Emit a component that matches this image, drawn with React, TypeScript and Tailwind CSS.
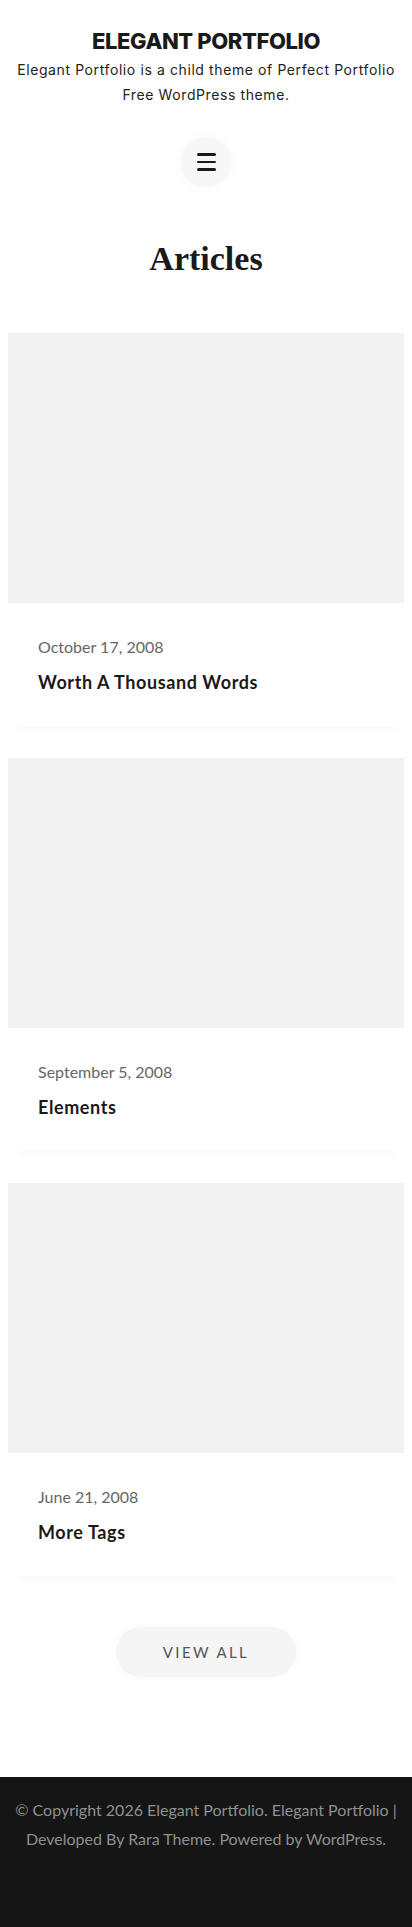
import { useState } from "react";

type Post = {
  id: number;
  date: string;
  title: string;
};

const POSTS: Post[] = [
  { id: 1, date: "October 17, 2008", title: "Worth A Thousand Words" },
  { id: 2, date: "September 5, 2008", title: "Elements" },
  { id: 3, date: "June 21, 2008", title: "More Tags" },
];

function MenuButton({ onClick }: { onClick: () => void }) {
  return (
    <button
      onClick={onClick}
      aria-label="Menu"
      className="flex h-[50px] w-[50px] flex-col items-center justify-center gap-[5px] rounded-full bg-[#f7f7f7] shadow-[0_0_12px_rgba(0,0,0,0.04)]"
    >
      <span className="block h-[2.5px] w-[19px] rounded-full bg-[#1a1a1a]" />
      <span className="block h-[2.5px] w-[19px] rounded-full bg-[#1a1a1a]" />
      <span className="block h-[2.5px] w-[19px] rounded-full bg-[#1a1a1a]" />
    </button>
  );
}

function PostCard({ post }: { post: Post }) {
  return (
    <article className="flex flex-col">
      <div className="h-[270px] w-full bg-[#f2f2f2]" />
      <div className="flex flex-col gap-[9px] bg-white px-[30px] pb-[30px] pt-[32px] shadow-[0_8px_12px_-8px_rgba(0,0,0,0.05)]">
        <p className="text-[16px] leading-[24px] text-[#666]">{post.date}</p>
        <h3 className="text-[18px] font-bold leading-[28px] tracking-[0.6px] text-[#1a1a1a]">
          <a href="#">{post.title}</a>
        </h3>
      </div>
    </article>
  );
}

export default function App() {
  const [menuOpen, setMenuOpen] = useState(false);

  return (
    <div className="flex min-h-[1927px] flex-col bg-white font-['Lato',sans-serif]">
      {/* Header */}
      <header className="flex flex-col items-center px-4 pt-[26px] text-center">
        <h1 className="font-['Inter',sans-serif] text-[22px] font-extrabold leading-[31px] tracking-[-0.4px] text-[#1a1a1a]">
          <a href="#">ELEGANT PORTFOLIO</a>
        </h1>
        <p className="font-['Inter',sans-serif] text-[14px] leading-[25px] tracking-[0.6px] text-[#222]">
          Elegant Portfolio is a child theme of Perfect Portfolio Free WordPress theme.
        </p>
        <div className="mt-[30px]">
          <MenuButton onClick={() => setMenuOpen(!menuOpen)} />
        </div>
      </header>

      {/* Articles */}
      <main className="flex flex-col">
        <h2 className="mt-[52px] text-center font-['Liberation_Serif',serif] text-[34px] font-bold leading-[40px] text-[#1a1a1a]">
          Articles
        </h2>

        <div className="mt-[54px] flex flex-col gap-[32px] px-[8px]">
          {POSTS.map((p) => (
            <PostCard key={p.id} post={p} />
          ))}
        </div>

        <div className="flex justify-center pt-[51px]">
          <a
            href="#"
            className="flex h-[50px] w-[180px] items-center justify-center rounded-full bg-[#f5f5f5] text-[15px] uppercase tracking-[2.4px] text-[#555] shadow-[0_0_10px_rgba(0,0,0,0.03)]"
          >
            View All
          </a>
        </div>
      </main>

      {/* Footer */}
      <footer className="mt-[100px] flex-1 bg-[#151515] px-[12px] pb-[74px] pt-[18px] text-center text-[16px] leading-[29px] text-[#8f8f8f]">
        <p>
          © Copyright 2026 <a href="#">Elegant Portfolio</a>. Elegant Portfolio | Developed By{" "}
          <a href="#">Rara Theme</a>. Powered by <a href="#">WordPress</a>.
        </p>
      </footer>
    </div>
  );
}
